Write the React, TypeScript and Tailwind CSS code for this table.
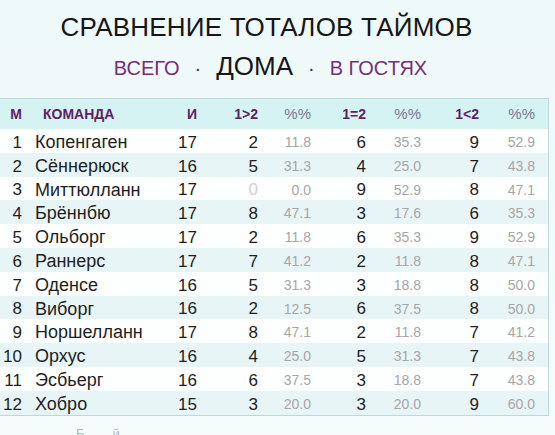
import React from "react";

const rows: [number, string, number, number, string, number, string, number, string][] = [
  [1, "Копенгаген", 17, 2, "11.8", 6, "35.3", 9, "52.9"],
  [2, "Сённерюск", 16, 5, "31.3", 4, "25.0", 7, "43.8"],
  [3, "Миттюлланн", 17, 0, "0.0", 9, "52.9", 8, "47.1"],
  [4, "Брённбю", 17, 8, "47.1", 3, "17.6", 6, "35.3"],
  [5, "Ольборг", 17, 2, "11.8", 6, "35.3", 9, "52.9"],
  [6, "Раннерс", 17, 7, "41.2", 2, "11.8", 8, "47.1"],
  [7, "Оденсе", 16, 5, "31.3", 3, "18.8", 8, "50.0"],
  [8, "Виборг", 16, 2, "12.5", 6, "37.5", 8, "50.0"],
  [9, "Норшелланн", 17, 8, "47.1", 2, "11.8", 7, "41.2"],
  [10, "Орхус", 16, 4, "25.0", 5, "31.3", 7, "43.8"],
  [11, "Эсбьерг", 16, 6, "37.5", 3, "18.8", 7, "43.8"],
  [12, "Хобро", 15, 3, "20.0", 3, "20.0", 9, "60.0"],
];

const grid =
  "grid grid-cols-[22px_138px_37px_61px_53px_55px_55px_58px_56px] items-center";

export default function App() {
  return (
    <div
      className="w-[555px] h-[435px] overflow-hidden bg-gradient-to-b from-[#eef9f9] to-[#f6fbfb] text-[#1e1e1e]"
      style={{ fontFamily: '"Liberation Sans", Arial, sans-serif' }}
    >
      <div className="h-[98px] flex flex-col items-center pt-[9px] pr-[22px]">
        <div className="text-[26px] leading-[36px] text-[#161616] tracking-[0.2px]">
          СРАВНЕНИЕ ТОТАЛОВ ТАЙМОВ
        </div>
        <div className="flex items-baseline mt-[6px] gap-[15px] leading-[30px] pl-[8px]">
          <span className="text-[20px] text-[#7a2c76]">ВСЕГО</span>
          <span className="text-[20px] text-[#333]">·</span>
          <span className="text-[26px] text-[#161616]">ДОМА</span>
          <span className="text-[20px] text-[#333]">·</span>
          <span className="text-[20px] text-[#7a2c76]">В ГОСТЯХ</span>
        </div>
      </div>
      <div className="w-[549px] border border-l-0 border-[#b9d9dc] bg-white">
        <div className={`${grid} h-[30px] bg-[#d6f3f3] text-[14px] font-bold text-[#5e2160]`}>
          <div className="text-right">М</div>
          <div className="pl-[21px]">КОМАНДА</div>
          <div className="text-right">И</div>
          <div className="text-right">1&gt;2</div>
          <div className="text-right font-normal text-[15px] text-[#7d7590]">%%</div>
          <div className="text-right">1=2</div>
          <div className="text-right font-normal text-[15px] text-[#7d7590]">%%</div>
          <div className="text-right">1&lt;2</div>
          <div className="text-right font-normal text-[15px] text-[#7d7590]">%%</div>
        </div>
        {rows.map((r, i) => (
          <div
            key={r[0]}
            className={`${grid} h-[23.8px] ${
              i % 2 === 1 ? "bg-[#e8f5f6]" : "bg-[#fdfefe]"
            }`}
          >
            <div className="text-right text-[17px]">{r[0]}</div>
            <div className="pl-[13px] text-[18px] whitespace-nowrap">{r[1]}</div>
            <div className="text-right text-[17px]">{r[2]}</div>
            <div
              className={`text-right text-[17px] ${
                r[3] === 0 ? "text-[#d2d2d2]" : ""
              }`}
            >
              {r[3]}
            </div>
            <div className="text-right text-[14px] text-[#a6a6a6]">{r[4]}</div>
            <div className="text-right text-[17px]">{r[5]}</div>
            <div className="text-right text-[14px] text-[#a6a6a6]">{r[6]}</div>
            <div className="text-right text-[17px]">{r[7]}</div>
            <div className="text-right text-[14px] text-[#a6a6a6]">{r[8]}</div>
          </div>
        ))}
      </div>
      <div className="h-[20px] overflow-hidden">
        <div className="pl-[76px] pt-[10px] text-[13px] leading-[16px] text-[#b4b8b8]">
          Б<span className="inline-block w-[28px]"></span>й
        </div>
      </div>
    </div>
  );
}
